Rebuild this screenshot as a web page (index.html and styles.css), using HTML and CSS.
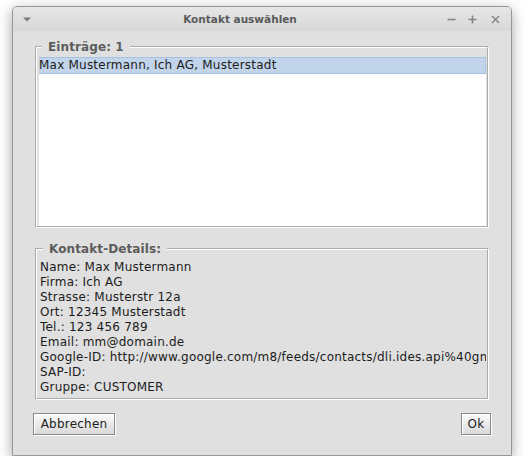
FILE: index.html
```html
<!DOCTYPE html>
<html lang="de">
<head>
<meta charset="utf-8">
<title>Kontakt auswählen</title>
<link rel="stylesheet" href="styles.css">
</head>
<body>
<div class="window">
  <div class="titlebar">
    <div class="tb-left">
      <svg class="menu-icon" width="8" height="5" viewBox="0 0 8 5"><path d="M0 0.5 H8 L4 4.5 Z" fill="#7a7a7a"/></svg>
    </div>
    <div class="title">Kontakt auswählen</div>
    <div class="tb-controls">
      <svg class="ctl ctl-min" width="9" height="9" viewBox="0 0 9 9"><path d="M0.5 4.5 H8.5" stroke="#858585" stroke-width="1.6"/></svg>
      <svg class="ctl ctl-max" width="9" height="9" viewBox="0 0 9 9"><path d="M0.5 4.5 H8.5 M4.5 0.5 V8.5" stroke="#858585" stroke-width="1.6"/></svg>
      <svg class="ctl ctl-close" width="9" height="9" viewBox="0 0 9 9"><path d="M1 1 L8 8 M8 1 L1 8" stroke="#858585" stroke-width="1.5"/></svg>
    </div>
  </div>
  <div class="content">
    <fieldset class="group group-list">
      <legend class="legend">Einträge: 1</legend>
      <div class="list">
        <div class="row selected">Max Mustermann, Ich AG, Musterstadt</div>
      </div>
    </fieldset>
    <fieldset class="group group-details">
      <legend class="legend">Kontakt-Details:</legend>
      <div class="details">
        <div class="line">Name: Max Mustermann</div>
        <div class="line">Firma: Ich AG</div>
        <div class="line">Strasse: Musterstr 12a</div>
        <div class="line">Ort: 12345 Musterstadt</div>
        <div class="line">Tel.: 123 456 789</div>
        <div class="line">Email: mm@domain.de</div>
        <div class="line">Google-ID: http://www.google.com/m8/feeds/contacts/dli.ides.api%40gm</div>
        <div class="line">SAP-ID:</div>
        <div class="line">Gruppe: CUSTOMER</div>
      </div>
    </fieldset>
  </div>
  <div class="buttons">
    <button class="btn btn-cancel">Abbrechen</button>
    <button class="btn btn-ok">Ok</button>
  </div>
</div>
</body>
</html>
```
FILE: styles.css
```css
html, body {
  margin: 0;
  background: #ffffff;
}

body {
  font-family: "DejaVu Sans", "Noto Sans", sans-serif;
  font-size: 12px;
  letter-spacing: 0.22px;
  color: #1c1c1c;
}

.window {
  margin: 6px 0 0 12px;
  width: 500px;
  height: 450px;
  box-sizing: border-box;
  border: 1px solid #979797;
  border-radius: 5px 5px 0 0;
  background: #e0e0e0;
  box-shadow: 0 4px 14px rgba(0, 0, 0, 0.36);
  display: flex;
  flex-direction: column;
}

.titlebar {
  height: 24px;
  flex: none;
  display: flex;
  align-items: center;
  background: linear-gradient(#e6e6e6, #d8d8d8);
  border-radius: 4px 4px 0 0;
}

.tb-left {
  width: 30px;
  box-sizing: border-box;
  padding-left: 10px;
  display: flex;
  align-items: center;
}

.menu-icon {
  display: block;
}

.title {
  flex: 1;
  text-align: center;
  font-weight: bold;
  font-size: 10.5px;
  letter-spacing: 0;
  color: #5a5a5a;
  white-space: nowrap;
}

.tb-controls {
  width: 74px;
  box-sizing: border-box;
  display: flex;
  align-items: center;
  justify-content: flex-end;
  padding-right: 11px;
}

.ctl {
  display: block;
}

.ctl-min {
  margin-right: 12px;
}

.ctl-max {
  margin-right: 14px;
}

.content {
  padding: 9px 22px 0 22px;
  flex: none;
}

.group {
  margin: 0;
  padding: 0;
  border: 2px groove #ffffff;
  min-width: 0;
}

.legend {
  margin-left: 3px;
  padding: 0 6px;
  font-weight: bold;
  font-size: 12px;
  line-height: 14px;
  letter-spacing: 0.1px;
  color: #5c5c5c;
}

.group-list {
  padding: 3px 1px 0 2px;
}

.list {
  height: 169px;
  background: #ffffff;
}

.row {
  line-height: 15px;
  white-space: nowrap;
  overflow: hidden;
}

.selected {
  background: #c2d4ea;
  border: 1px solid #a6c2e4;
  border-left: none;
}

.group-details {
  margin-top: 14px;
  padding: 4px 1px 3px 3px;
}

.details {
  overflow: hidden;
}

.line {
  line-height: 15px;
  white-space: nowrap;
}

.buttons {
  display: flex;
  justify-content: space-between;
  padding: 0 20px;
  margin-top: 13px;
}

.btn {
  height: 22px;
  box-sizing: border-box;
  margin: 0;
  padding: 0;
  font-family: "DejaVu Sans", "Noto Sans", sans-serif;
  font-size: 12px;
  letter-spacing: 0.22px;
  color: #1c1c1c;
  border: 1px solid #8a8a8a;
  border-radius: 0;
  background: linear-gradient(#fbfbfb, #d9d9d9);
  box-shadow: inset 1px 1px 0 #ffffff, 1px 1px 0 #ffffff;
}

.btn-cancel {
  width: 82px;
}

.btn-ok {
  width: 30px;
}
```
